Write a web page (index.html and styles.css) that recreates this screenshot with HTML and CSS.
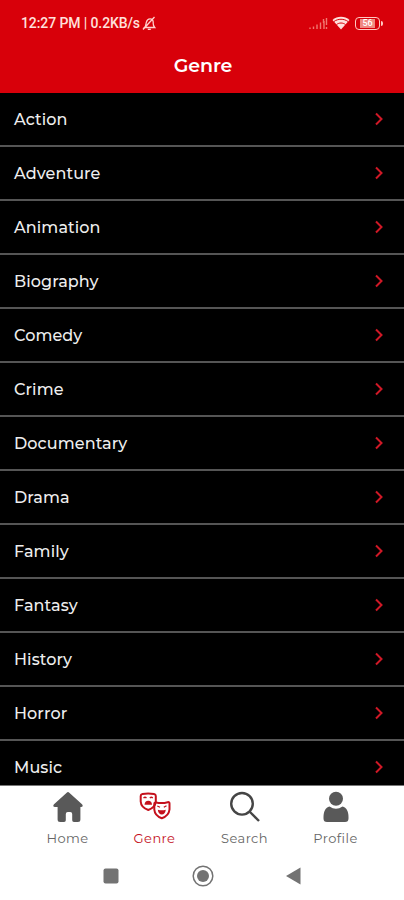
FILE: index.html
```html
<!DOCTYPE html>
<html lang="en">
<head>
    <meta charset="UTF-8">
    <meta name="viewport" content="width=device-width, initial-scale=1.0">
    <title>Genre</title>
    <link rel="stylesheet" href="styles.css">
</head>
<body>

    <header class="header">
        <div class="status-bar">
            <span class="status-time">12:27 PM | 0.2KB/s</span>
            <svg class="mute-icon" width="14" height="15" viewBox="0 0 14 15">
                <path d="M2.500 11.500c1.600-1.200 1.300-3.600 1.900-5.400C5 4 6.300 2.900 8 2.900c2.100 0 3.400 1.600 3.200 3.800-.1 2 .3 3.600 1.500 4.800z M5.800 13.400h3 M1 13.500L12.500 1"/>
            </svg>
            <div class="status-icons">
                <svg class="signal-icon" width="20" height="13" viewBox="0 0 20 13">
                    <path d="M2 12v-1.500M5.500 12V9.500M9 12V7.500M12.500 12V5.500M16 12V4M18.500 12v-2M15.500 2v4M18.500 1v7"/>
                </svg>
                <svg class="wifi-icon" width="18" height="14" viewBox="0 0 18 14">
                    <path class="wifi-fill" d="M9 13.500L.5 4C5.300-.4 12.700-.4 17.500 4z"/>
                    <path class="wifi-gap" d="M2 5.500c4-3 10-3 14 0M4.500 8.600c2.500-2.100 6.500-2.100 9 0"/>
                </svg>
                <div class="battery"><span>56</span></div>
            </div>
        </div>
        <h1>Genre</h1>
    </header>

    <ul class="genre-list" id="genreList"></ul>

    <nav class="tab-bar">
        <a class="tab home">
            <svg width="32" height="32" viewBox="0 0 32 32">
                <path d="M14.700 1.700q1.300-1.200 2.600 0L30 13.200c1.300 1.300.7 2.800-1 2.800h-.6v12.500q0 2.500-2.500 2.500h-4q-1.700 0-1.700-1.700V23q0-2-2-2h-2.400q-2 0-2 2v6.300q0 1.700-1.700 1.700h-4q-2.500 0-2.500-2.500V16H3c-1.700 0-2.300-1.500-1-2.800z"/>
            </svg>
            <span>Home</span>
        </a>
        <a class="tab genre active">
            <svg width="32" height="32" viewBox="0 0 32 32">
                <path class="mask" d="M3.500 3Q9 1.800 15 3q1.800.4 1.800 2v5.500q-.5 6-7.500 8.500Q2 16.500 1.700 10.500V5q0-1.600 1.800-2z"/>
                <path class="face" d="M4.500 7q1.500-1.500 3 0M10.800 7q1.500-1.500 3 0"/>
                <path class="mouth" d="M5.500 13.800q.3-4 3.800-4t3.700 4z"/>
                <path class="mask" d="M17 11.500q6 1.300 11.700-.3 1.800-.4 1.800 1.300v6q-.7 6.500-7.700 8.700-7-2.200-7.500-8.700v-5.500q0-1.700 1.700-1.500z"/>
                <path class="face" d="M18.300 15l2.700 1.300M27.500 14.700l-2.700 1.600"/>
                <path class="mouth" d="M18.800 18.700q4 1.300 8 0-.7 4.800-4 4.800t-4-4.800z"/>
            </svg>
            <span>Genre</span>
        </a>
        <a class="tab search">
            <svg width="32" height="32" viewBox="0 0 32 32">
                <circle cx="13" cy="12.800" r="10.800"/>
                <path d="M20.500 20.500L30 30"/>
            </svg>
            <span>Search</span>
        </a>
        <a class="tab profile">
            <svg width="32" height="32" viewBox="0 0 32 32">
                <circle cx="16" cy="7.700" r="7"/>
                <path d="M9.500 15.500Q16 20 22.500 15.500c4 1 6 5 6 10.500v1.500q0 3.500-3.500 3.500H7q-3.500 0-3.500-3.500V26c0-5.500 2-9.500 6-10.500z"/>
            </svg>
            <span>Profile</span>
        </a>
    </nav>

    <div class="system-nav">
        <svg width="22" height="22" viewBox="0 0 22 22"><rect x="3.500" y="3.500" width="15" height="15" rx="2"/></svg>
        <svg width="22" height="22" viewBox="0 0 22 22"><circle class="ring" cx="11" cy="11" r="9.800"/><circle cx="11" cy="11" r="6"/></svg>
        <svg width="22" height="22" viewBox="0 0 22 22"><path d="M3 11L17.500 2.500v17z"/></svg>
    </div>

    <script>
        var genres = ['Action', 'Adventure', 'Animation', 'Biography', 'Comedy', 'Crime', 'Documentary',
            'Drama', 'Family', 'Fantasy', 'History', 'Horror', 'Music'];
        var genreList = document.getElementById('genreList');

        genres.forEach(function(name) {
            var item = document.createElement('li');
            item.innerHTML = '<span>' + name + '</span>' +
                '<svg width="10" height="14" viewBox="0 0 10 14"><path d="M2 1.500L7.500 7 2 12.500"/></svg>';
            genreList.appendChild(item);
        });
    </script>
</body>
</html>
```
FILE: styles.css
```css
body {
    font-family: 'Montserrat', 'Inter', sans-serif;
    background-color: #fff;
    margin: 0;
    height: 900px;
    display: flex;
    flex-direction: column;
    overflow: hidden;
}

.header {
    background-color: #d8000a;
    color: #fff;
    height: 93px;
    flex: none;
}

.status-bar {
    display: flex;
    align-items: center;
    height: 18px;
    padding: 14px 22px 0 21px;
}

.status-time {
    font-family: Roboto, sans-serif;
    font-size: 14px;
    font-weight: 500;
    color: #ffe0dc;
    letter-spacing: -0.1px;
}

.mute-icon {
    margin-left: 2px;
    fill: none;
    stroke: #ffd0cc;
    stroke-width: 1.3;
}

.status-icons {
    display: flex;
    align-items: center;
    margin-left: auto;
}

.signal-icon {
    stroke: #f07870;
    stroke-width: 1.4;
    margin-right: 4px;
}

.wifi-icon {
    margin-right: 5px;
}

.wifi-fill {
    fill: #ffe0dc;
}

.wifi-gap {
    fill: none;
    stroke: #d8000a;
    stroke-width: 1;
}

.battery {
    position: relative;
    box-sizing: border-box;
    width: 25px;
    height: 13px;
    margin-right: 2px;
    padding: 1px 4px;
    border: 1.5px solid #ffc8c0;
    border-radius: 4px;
    display: flex;
}

.battery span {
    flex: 1;
    background-color: #f08880;
    color: #fff;
    font: 500 9px/9px Roboto, sans-serif;
    text-align: center;
}

/* battery tip */
.battery::after {
    content: '';
    position: absolute;
    right: -4px;
    top: 3px;
    width: 2px;
    height: 5px;
    background-color: #ffc8c0;
    border-radius: 0 2px 2px 0;
}

h1 {
    margin: 21px 0 0;
    padding-left: 2px;
    font-size: 19px;
    line-height: 26px;
    font-weight: 600;
    letter-spacing: -0.1px;
    text-align: center;
}

.genre-list {
    flex: 1;
    min-height: 0;
    overflow: hidden;
    margin: 0;
    padding: 0;
    list-style: none;
    background-color: #000;
    border-bottom: 1px solid #777;
}

.genre-list li {
    box-sizing: border-box;
    height: 54px;
    display: flex;
    align-items: center;
    justify-content: space-between;
    padding: 0 20px 0 14px;
    border-bottom: 2px solid #555;
    color: #eee;
    font-size: 16px;
    line-height: 20px;
    font-weight: 500;
    letter-spacing: 0.1px;
}

.genre-list span {
    padding-top: 1px;
}

.genre-list svg {
    fill: none;
    stroke: #d01826;
    stroke-width: 2;
}

.tab-bar {
    flex: none;
    height: 64px;
    display: flex;
    justify-content: center;
    padding-left: 2px;
    color: #666;
    font-size: 13px;
    letter-spacing: 0.45px;
}

.tab {
    width: 91px;
    padding-top: 5px;
    display: flex;
    flex-direction: column;
    align-items: center;
    gap: 6px;
    line-height: 18px;
}

.tab.home {
    width: 85px;
}

.tab svg {
    fill: #595959;
}

.tab.active {
    width: 89px;
    color: #c4101c;
}

.mask,
.face {
    fill: none;
    stroke: #c4101c;
    stroke-width: 2;
}

.face {
    stroke-width: 1.2;
}

.mouth {
    fill: #c4101c;
}

.tab.search svg {
    fill: none;
    stroke: #454545;
    stroke-width: 2.4;
}

.system-nav {
    flex: none;
    height: 50px;
    display: flex;
    justify-content: center;
    gap: 69.5px;
    padding-left: 1px;
    box-sizing: border-box;
}

.system-nav svg {
    margin-top: 15px;
    fill: #737373;
}

.system-nav .ring {
    fill: none;
    stroke: #737373;
    stroke-width: 1.5;
}
```
